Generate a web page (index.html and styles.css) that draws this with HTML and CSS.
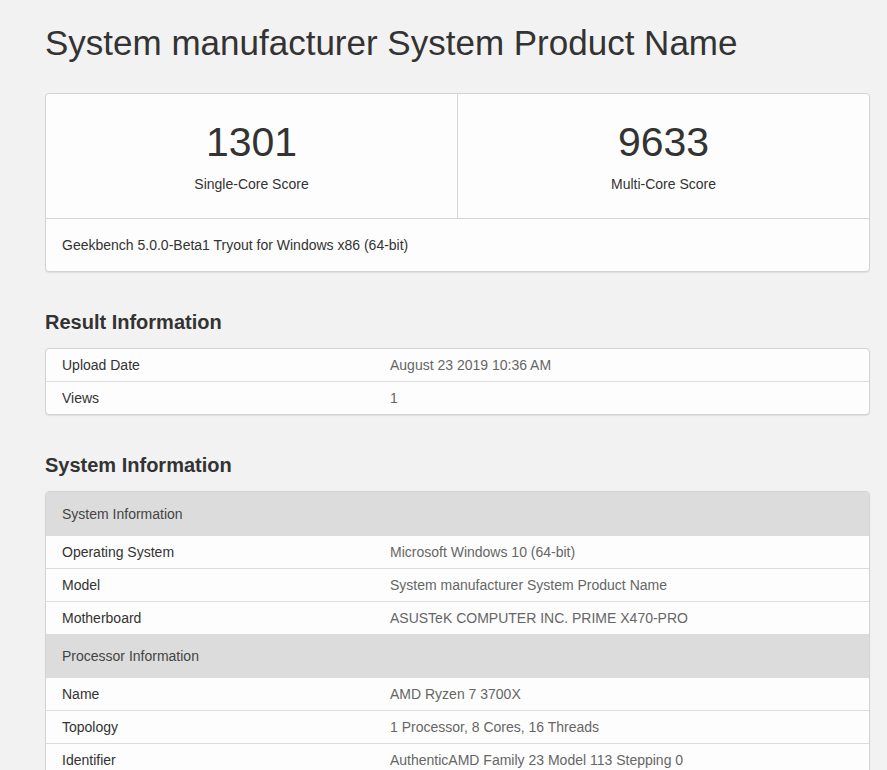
FILE: index.html
```html
<!DOCTYPE html>
<html>
<head>
<meta charset="utf-8">
<link rel="stylesheet" href="styles.css">
</head>
<body>
<div class="container">
  <h1 class="page-title">System manufacturer System Product Name</h1>

  <div class="card score-card">
    <div class="scores">
      <div class="score">
        <div class="score-value">1301</div>
        <div class="score-label">Single-Core Score</div>
      </div>
      <div class="score">
        <div class="score-value">9633</div>
        <div class="score-label">Multi-Core Score</div>
      </div>
    </div>
    <div class="score-footer">Geekbench 5.0.0-Beta1 Tryout for Windows x86 (64-bit)</div>
  </div>

  <h2 class="section-title">Result Information</h2>
  <div class="card">
    <table class="info-table">
      <tr><td class="name">Upload Date</td><td class="value">August 23 2019 10:36 AM</td></tr>
      <tr><td class="name">Views</td><td class="value">1</td></tr>
    </table>
  </div>

  <h2 class="section-title">System Information</h2>
  <div class="card">
    <table class="info-table">
      <tr class="group"><th colspan="2">System Information</th></tr>
      <tr><td class="name">Operating System</td><td class="value">Microsoft Windows 10 (64-bit)</td></tr>
      <tr><td class="name">Model</td><td class="value">System manufacturer System Product Name</td></tr>
      <tr><td class="name">Motherboard</td><td class="value">ASUSTeK COMPUTER INC. PRIME X470-PRO</td></tr>
      <tr class="group"><th colspan="2">Processor Information</th></tr>
      <tr><td class="name">Name</td><td class="value">AMD Ryzen 7 3700X</td></tr>
      <tr><td class="name">Topology</td><td class="value">1 Processor, 8 Cores, 16 Threads</td></tr>
      <tr><td class="name">Identifier</td><td class="value">AuthenticAMD Family 23 Model 113 Stepping 0</td></tr>
    </table>
  </div>
</div>
</body>
</html>
```
FILE: styles.css
```css
html, body {
  margin: 0;
  padding: 0;
  background: #f2f2f2;
}
body {
  font-family: "Liberation Sans", Arial, sans-serif;
  font-size: 14px;
  color: #333;
}
.container {
  width: 825px;
  padding: 0 0 40px 45px;
}
.page-title {
  font-size: 35px;
  font-weight: normal;
  line-height: 40px;
  margin: 23px 0 30px;
  color: #333;
}
.card {
  background: #fdfdfd;
  border: 1px solid #d3d3d3;
  border-radius: 4px;
  box-shadow: 0 1px 1px rgba(0, 0, 0, 0.08);
  overflow: hidden;
}
.scores {
  display: flex;
  border-bottom: 1px solid #d6d6d6;
}
.score {
  flex: 1;
  text-align: center;
  height: 124px;
  box-sizing: border-box;
  padding-top: 24px;
}
.score + .score {
  border-left: 1px solid #d6d6d6;
}
.score-value {
  font-size: 41px;
  line-height: 48px;
  color: #333;
}
.score-label {
  margin-top: 8px;
  font-size: 14px;
  line-height: 20px;
  color: #333;
}
.score-footer {
  height: 52px;
  box-sizing: border-box;
  padding: 16px;
  line-height: 20px;
}
.section-title {
  font-size: 20px;
  font-weight: bold;
  line-height: 24px;
  margin: 38px 0 14px;
  color: #333;
}
.info-table {
  width: 100%;
  border-collapse: collapse;
}
.info-table td {
  padding: 6px 16px;
  line-height: 20px;
  border-top: 1px solid #ddd;
}
.info-table tr:first-child td {
  border-top: none;
}
.info-table td.name {
  width: 296px;
  color: #333;
}
.info-table td.value {
  color: #666;
}
.info-table tr.group th {
  background: #dcdcdc;
  height: 43px;
  box-sizing: border-box;
  text-align: left;
  font-weight: normal;
  padding: 0 16px;
  line-height: 20px;
  color: #444;
  border-top: 1px solid #dcdcdc;
}
.info-table tr.group:first-child th {
  border-top: none;
  height: 44px;
}
.info-table tr.group + tr td {
  border-top: none;
}
```
